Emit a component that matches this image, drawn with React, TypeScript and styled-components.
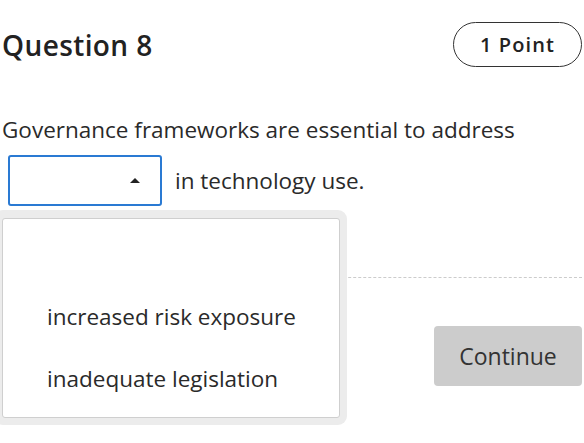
import React, { useState } from "react";
import styled, { createGlobalStyle } from "styled-components";

const GlobalStyle = createGlobalStyle`
  * { box-sizing: border-box; }
  body {
    margin: 0;
    background: #ffffff;
    font-family: "Open Sans", "Noto Sans", Arial, sans-serif;
    color: #2a2a2a;
  }
`;

const Page = styled.div`
  min-height: 100vh;
  padding: 22px 2px 0 2px;
`;

const Header = styled.div`
  display: flex;
  justify-content: space-between;
  align-items: center;
`;

const Title = styled.h1`
  margin: 0;
  font-size: 28px;
  font-weight: 600;
  letter-spacing: 0.4px;
  color: #222;
`;

const PointPill = styled.div`
  width: 129px;
  height: 45px;
  border: 1px solid #333;
  border-radius: 23px;
  display: flex;
  align-items: center;
  justify-content: center;
  font-size: 20px;
  font-weight: 600;
  letter-spacing: 1.1px;
  color: #222;
`;

const Prompt = styled.p`
  margin: 48px 0 0 0;
  font-size: 22.5px;
  line-height: 30px;
  color: #2a2a2a;
`;

const BlankRow = styled.div`
  display: flex;
  align-items: center;
  gap: 13px;
  margin-top: 10px;
  padding-left: 6px;
  font-size: 22.5px;
  color: #2a2a2a;
`;

const SelectWrap = styled.div`
  position: relative;
`;

const SelectBox = styled.button`
  width: 154px;
  height: 51px;
  border: 2px solid #2a7ad3;
  border-radius: 3px;
  background: #fff;
  display: flex;
  align-items: center;
  justify-content: flex-end;
  padding: 0 20px 0 0;
  cursor: pointer;
`;

const Caret = styled.span`
  width: 0;
  height: 0;
  border-left: 5px solid transparent;
  border-right: 5px solid transparent;
  border-bottom: 5px solid #222;
`;

const Menu = styled.div`
  position: absolute;
  top: calc(100% + 4px);
  left: -14px;
  width: 353px;
  padding: 8px 7px 7px 8px;
  background: #ececec;
  border-radius: 9px;
  z-index: 2;
`;

const MenuList = styled.ul`
  list-style: none;
  margin: 0;
  padding: 0;
  height: 200px;
  background: #fff;
  border: 1px solid #cfcfcf;
  border-radius: 3px;
  display: flex;
  flex-direction: column;
  padding-top: 4px;
`;

const Option = styled.li`
  height: 62px;
  display: flex;
  align-items: center;
  padding-left: 44px;
  font-size: 22.5px;
  color: #2a2a2a;
  cursor: pointer;
`;

const Divider = styled.hr`
  margin: 71px 0 0 0;
  border: 0;
  border-top: 1px dashed #cccccc;
`;

const Footer = styled.div`
  display: flex;
  justify-content: flex-end;
  margin-top: 48px;
`;

const ContinueButton = styled.button`
  width: 148px;
  height: 60px;
  border: 0;
  border-radius: 4px;
  background: #cccccc;
  color: #333;
  font-family: inherit;
  font-size: 23px;
`;

const options = ["", "increased risk exposure", "inadequate legislation"];

export default function App() {
  const [choice, setChoice] = useState<string>("");

  return (
    <Page>
      <GlobalStyle />
      <Header>
        <Title>Question 8</Title>
        <PointPill>1 Point</PointPill>
      </Header>
      <Prompt>Governance frameworks are essential to address</Prompt>
      <BlankRow>
        <SelectWrap>
          <SelectBox aria-label={choice || "Select an answer"}>
            <Caret />
          </SelectBox>
          <Menu>
            <MenuList>
              {options.map((o) => (
                <Option key={o || "blank"} onClick={() => setChoice(o)}>
                  {o}
                </Option>
              ))}
            </MenuList>
          </Menu>
        </SelectWrap>
        <span>in technology use.</span>
      </BlankRow>
      <Divider />
      <Footer>
        <ContinueButton disabled>Continue</ContinueButton>
      </Footer>
    </Page>
  );
}
